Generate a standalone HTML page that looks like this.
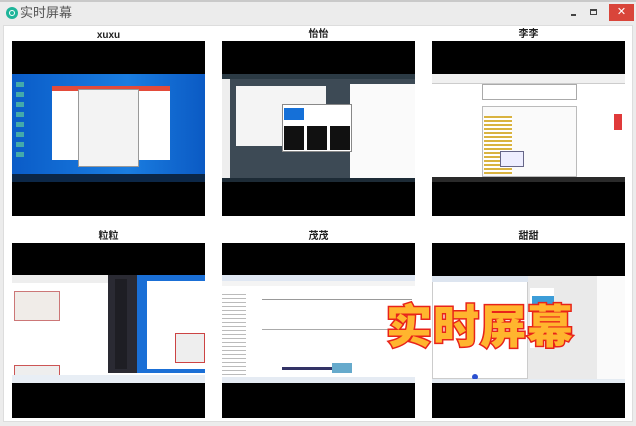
<!DOCTYPE html>
<html><head><meta charset="utf-8"><style>
*{margin:0;padding:0;box-sizing:border-box}
body{width:636px;height:426px;background:#c9c9c9;position:relative;overflow:hidden;font-family:"Liberation Sans","Noto Sans CJK SC",sans-serif}
.a{position:absolute}
.win{left:0;top:2px;width:636px;height:424px;background:#ececec}
.content{left:3px;top:25px;width:630px;height:397px;background:#fff;border:1px solid #ddd}
.lbl{position:absolute;font-size:10px;line-height:11px;font-weight:bold;color:#222;text-align:center;width:193px}
.blk{position:absolute;background:#000;width:193px;height:175px}
.scr{position:absolute;left:0;width:193px}
.sticker{left:386px;top:296px;font-size:46px;font-weight:900;color:#ffb52e;-webkit-text-stroke:3px #e8231a;paint-order:stroke fill;letter-spacing:1px;font-family:"Noto Sans CJK SC",sans-serif;line-height:56px}
</style></head><body>
<div class="a win"></div>
<div class="a" style="left:6px;top:7px;width:12px;height:12px;border-radius:50%;background:#1fb59a"></div>
<div class="a" style="left:9px;top:10px;width:6px;height:6px;border-radius:50%;border:1.5px solid #fff"></div>
<div class="a" style="left:20px;top:5px;font-size:13px;line-height:16px;color:#555">实时屏幕</div>
<div class="a" style="left:571px;top:14px;width:5px;height:2px;background:#444"></div>
<div class="a" style="left:590px;top:9px;width:7px;height:6px;border:1px solid #444;border-top-width:2px"></div>
<div class="a" style="left:609px;top:4px;width:25px;height:17px;background:#d9453a;color:#fff;font-size:11px;text-align:center;line-height:17px">✕</div>
<div class="a content"></div>

<div class="lbl" style="left:12px;top:30px">xuxu</div>
<div class="lbl" style="left:222px;top:29px">怡怡</div>
<div class="lbl" style="left:432px;top:29px">李李</div>
<div class="lbl" style="left:12px;top:231px">粒粒</div>
<div class="lbl" style="left:222px;top:231px">茂茂</div>
<div class="lbl" style="left:432px;top:231px">甜甜</div>

<!-- tile 1 -->
<div class="blk" style="left:12px;top:41px">
 <div class="scr" style="top:33px;height:108px;background:linear-gradient(90deg,#0a5cc8,#1a7de0 60%,#0b5ac4)">
  <div class="a" style="left:40px;top:12px;width:118px;height:74px;background:#fff;border-top:5px solid #e34b3a"></div>
  <div class="a" style="left:66px;top:15px;width:61px;height:78px;background:#f3f3f3;border:1px solid #999"></div>
  <div class="a" style="left:4px;top:8px;width:8px;height:80px;background:repeating-linear-gradient(#4aa 0 5px,transparent 5px 10px)"></div>
  <div class="a" style="left:0;top:100px;width:193px;height:8px;background:#0c2747"></div>
 </div>
</div>
<!-- tile 2 -->
<div class="blk" style="left:222px;top:41px">
 <div class="scr" style="top:33px;height:108px;background:#3d4a55">
  <div class="a" style="left:0;top:0;width:193px;height:5px;background:#2b3a44"></div>
  <div class="a" style="left:0;top:5px;width:8px;height:103px;background:#eee"></div>
  <div class="a" style="left:14px;top:12px;width:90px;height:60px;background:#f4f4f4"></div>
  <div class="a" style="left:128px;top:10px;width:65px;height:98px;background:#fafafa"></div>
  <div class="a" style="left:60px;top:30px;width:70px;height:48px;background:#fff;border:1px solid #888"></div>
  <div class="a" style="left:62px;top:34px;width:20px;height:12px;background:#1570d8"></div>
  <div class="a" style="left:62px;top:52px;width:66px;height:24px;background:repeating-linear-gradient(90deg,#111 0 20px,#fff 20px 23px)"></div>
  <div class="a" style="left:0;top:104px;width:193px;height:4px;background:#1d2b36"></div>
 </div>
</div>
<!-- tile 3 -->
<div class="blk" style="left:432px;top:41px">
 <div class="scr" style="top:33px;height:108px;background:#fff">
  <div class="a" style="left:0;top:0;width:193px;height:10px;background:#f0f0f0;border-bottom:1px solid #ccc"></div>
  <div class="a" style="left:50px;top:10px;width:95px;height:16px;border:1px solid #aaa"></div>
  <div class="a" style="left:50px;top:32px;width:95px;height:71px;border:1px solid #bbb;background:#fafafa"></div>
  <div class="a" style="left:52px;top:42px;width:28px;height:58px;background:repeating-linear-gradient(#d9b340 0 2px,#fff 2px 4px)"></div>
  <div class="a" style="left:68px;top:77px;width:24px;height:16px;background:#eef;border:1px solid #668"></div>
  <div class="a" style="left:182px;top:40px;width:8px;height:16px;background:#e03a3a"></div>
  <div class="a" style="left:0;top:103px;width:193px;height:5px;background:#2a2a2a"></div>
 </div>
</div>
<!-- tile 4 -->
<div class="blk" style="left:12px;top:243px">
 <div class="scr" style="top:32px;height:108px;background:#fff">
  <div class="a" style="left:0;top:0;width:96px;height:8px;background:#eee"></div>
  <div class="a" style="left:2px;top:16px;width:46px;height:30px;background:#f0ece8;border:1px solid #c77"></div>
  <div class="a" style="left:2px;top:90px;width:46px;height:14px;background:#eee;border:1px solid #c55"></div>
  <div class="a" style="left:96px;top:0;width:29px;height:98px;background:#2a2a33"></div>
  <div class="a" style="left:103px;top:4px;width:12px;height:90px;background:#1e1e24"></div>
  <div class="a" style="left:125px;top:0;width:68px;height:98px;background:#1a6fd6"></div>
  <div class="a" style="left:135px;top:6px;width:58px;height:88px;background:#fff"></div>
  <div class="a" style="left:163px;top:58px;width:30px;height:30px;background:#eee;border:1px solid #c44"></div>
  <div class="a" style="left:0;top:100px;width:193px;height:8px;background:#e8eef5"></div>
 </div>
</div>
<!-- tile 5 -->
<div class="blk" style="left:222px;top:243px">
 <div class="scr" style="top:32px;height:108px;background:#fff">
  <div class="a" style="left:0;top:0;width:193px;height:6px;background:#dfe7f3"></div>
  <div class="a" style="left:0;top:6px;width:193px;height:5px;background:#f4f4f4"></div>
  <div class="a" style="left:0;top:16px;width:24px;height:85px;background:repeating-linear-gradient(#fff 0 3px,#bbb 3px 4px)"></div>
  <div class="a" style="left:40px;top:24px;width:150px;height:1px;background:#999"></div>
  <div class="a" style="left:40px;top:54px;width:150px;height:1px;background:#aaa"></div>
  <div class="a" style="left:60px;top:92px;width:50px;height:3px;background:#336"></div>
  <div class="a" style="left:110px;top:88px;width:20px;height:10px;background:#6ac"></div>
  <div class="a" style="left:0;top:102px;width:193px;height:6px;background:#e5ebf3"></div>
 </div>
</div>
<!-- tile 6 -->
<div class="blk" style="left:432px;top:243px">
 <div class="scr" style="top:33px;height:107px;background:#eaeaea">
  <div class="a" style="left:0;top:0;width:96px;height:103px;background:#fff;border:1px solid #ccc"></div>
  <div class="a" style="left:0;top:0;width:96px;height:6px;background:#dde5f0"></div>
  <div class="a" style="left:98px;top:12px;width:24px;height:60px;background:#fff"></div>
  <div class="a" style="left:100px;top:20px;width:22px;height:8px;background:#3c9dd8"></div>
  <div class="a" style="left:165px;top:0;width:28px;height:103px;background:#fafafa"></div>
  <div class="a" style="left:40px;top:98px;width:6px;height:6px;border-radius:50%;background:#2a50d0"></div>
  <div class="a" style="left:0;top:103px;width:193px;height:4px;background:#e5ecf3"></div>
 </div>
</div>

<div class="a sticker">实时屏幕</div>
</body></html>
